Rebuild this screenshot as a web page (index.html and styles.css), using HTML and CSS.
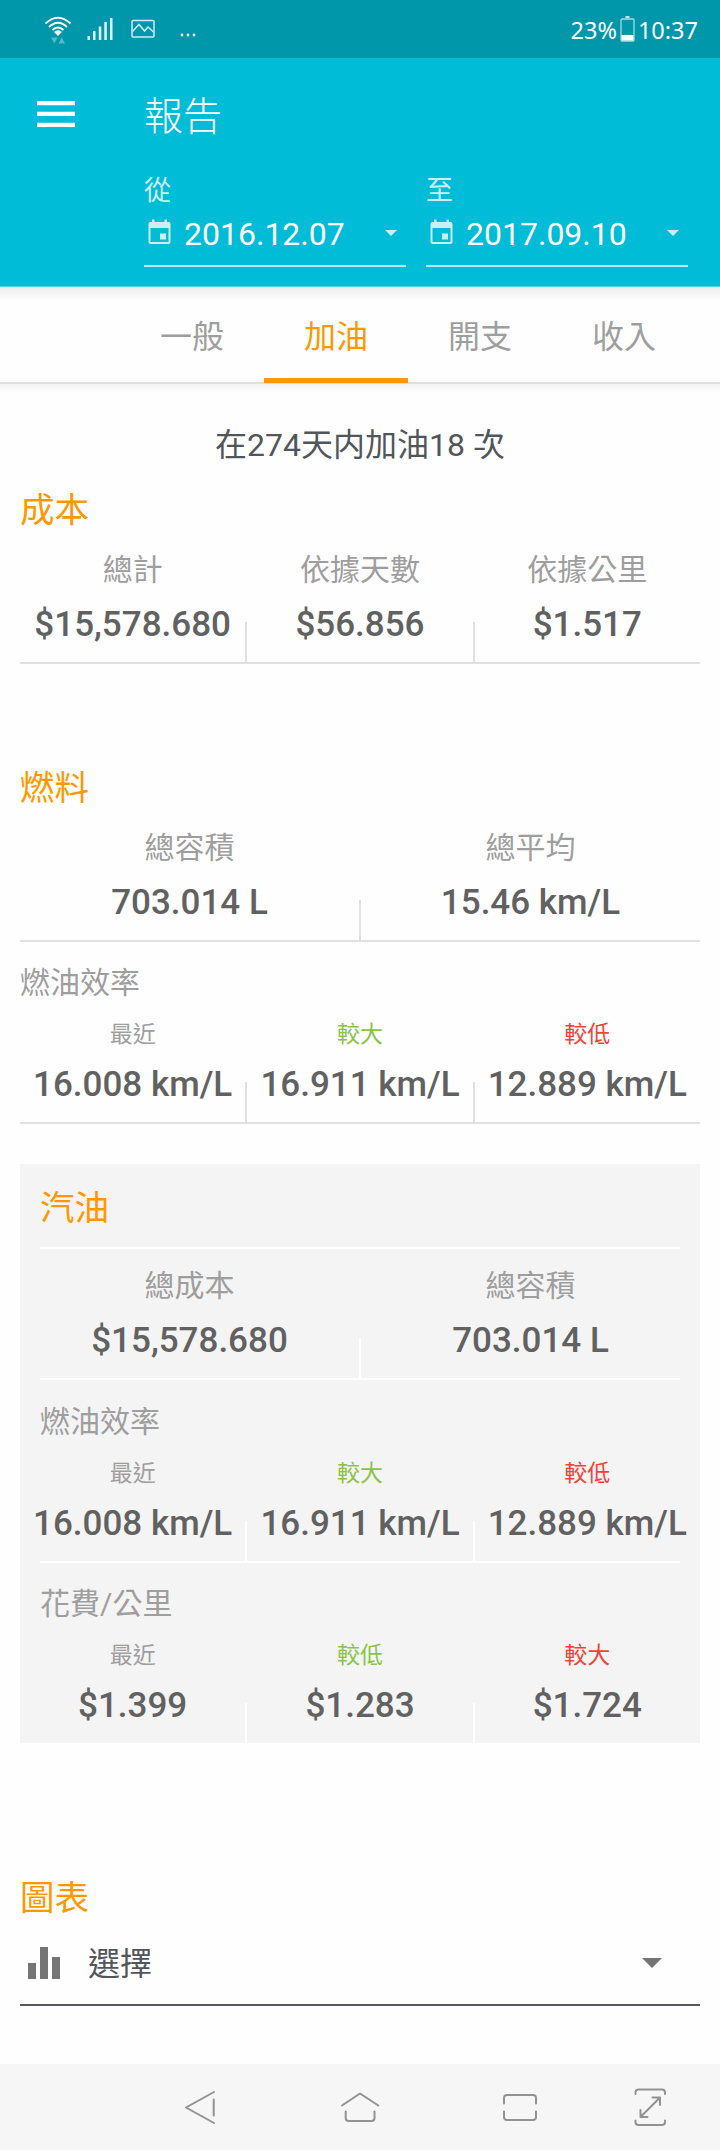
FILE: index.html
```
<!DOCTYPE html>
<html lang="zh-Hant">
<head>
    <meta charset="UTF-8">
    <meta name="viewport" content="width=device-width, initial-scale=1.0">
    <title>報告</title>
    <link rel="stylesheet" href="styles.css">
</head>
<body>
    <div class="status-bar">
        <svg class="icon-wifi" width="28" height="28" viewBox="0 0 28 28" fill="none" stroke="#fff" stroke-width="1.8">
            <path d="M1.5 7.5Q14 -4 26.500 7.500"/>
            <path d="M5 11Q14 2.500 23 11"/>
            <path d="M8.500 14Q14 9 19.500 14"/>
            <path d="M10 16Q14 12.500 18 16L14 20Z" fill="#fff" stroke="none"/>
            <path d="M7 21.500h6.500l-3.250 6zM14.500 27.500h6.500l-3.250-6z" fill="#5ab9c9" stroke="none"/>
        </svg>
        <svg class="icon-signal" width="27" height="24" viewBox="0 0 27 24" fill="#e0f3f6">
            <path d="M0.500 19h2.500v4h-2.500zM6 14h2.500v9h-2.500zM11.800 9.500h2.500v13.500h-2.500zM17.300 5h2.500v18h-2.500zM23 1h2.500v22h-2.500z"/>
        </svg>
        <svg class="icon-image" width="24" height="20" viewBox="0 0 24 20" fill="none" stroke="#d0edf1" stroke-width="1.5">
            <rect x="1" y="1.500" width="22" height="16.500" rx="1"/>
            <path d="M1.500 12.500L8 5.500L13.500 12L17 8L22.500 13"/>
        </svg>
        <svg class="icon-more" width="16" height="4" viewBox="0 0 16 4" fill="#fff">
            <circle cx="2" cy="2" r="1.400"/>
            <circle cx="8" cy="2" r="1.400"/>
            <circle cx="14" cy="2" r="1.400"/>
        </svg>
        <div class="status-right">
            <span>23%</span>
            <svg class="icon-battery" width="15" height="26" viewBox="0 0 15 26">
                <path d="M5.500 1h4" stroke="#fff" stroke-width="1.500"/>
                <rect x="1" y="3" width="13" height="22" rx="1" fill="none" stroke="#a6dae2" stroke-width="1.300"/>
                <path d="M1.500 19h12v5.500h-12z" fill="#fff"/>
            </svg>
            <span>10:37</span>
        </div>
    </div>

    <header class="header">
        <div class="title-row">
            <svg class="icon-menu" width="38" height="26" viewBox="0 0 38 26" fill="#fff">
                <path d="M0 0h38v4.300h-38zM0 10.800h38v4.300h-38zM0 21.700h38v4.300h-38z"/>
            </svg>
            <h1>報告</h1>
        </div>
        <div class="dates">
            <div class="date-field">
                <label>從</label>
                <div class="date-value">
                    <svg class="icon-calendar" width="23" height="26" viewBox="0 0 23 26" fill="#cceff5">
                        <path fill-rule="evenodd" d="M4 0.500h2.500v2.500h10v-2.500h2.500v2.500h1.500q2 0 2 2v18q0 2-2 2h-18q-2 0-2-2v-18q0-2 2-2h1.500zM2.500 9v14h18v-14z"/>
                        <path d="M12 14.500h6v6h-6z"/>
                    </svg>
                    <span>2016.12.07</span>
                    <svg class="icon-caret" width="12" height="6" viewBox="0 0 12 6" fill="#cceff5"><path d="M0 0h12l-6 6z"/></svg>
                </div>
            </div>
            <div class="date-field">
                <label>至</label>
                <div class="date-value">
                    <svg class="icon-calendar" width="23" height="26" viewBox="0 0 23 26" fill="#cceff5">
                        <path fill-rule="evenodd" d="M4 0.500h2.500v2.500h10v-2.500h2.500v2.500h1.500q2 0 2 2v18q0 2-2 2h-18q-2 0-2-2v-18q0-2 2-2h1.500zM2.500 9v14h18v-14z"/>
                        <path d="M12 14.500h6v6h-6z"/>
                    </svg>
                    <span>2017.09.10</span>
                    <svg class="icon-caret" width="12" height="6" viewBox="0 0 12 6" fill="#cceff5"><path d="M0 0h12l-6 6z"/></svg>
                </div>
            </div>
        </div>
    </header>

    <nav class="tabs">
        <a class="tab">一般</a>
        <a class="tab active">加油</a>
        <a class="tab">開支</a>
        <a class="tab">收入</a>
    </nav>

    <main class="content">
        <p class="summary">在274天内加油18 次</p>

        <section class="section">
            <h2>成本</h2>
            <div class="stats">
                <div class="stat"><span class="label">總計</span><span class="value">$15,578.680</span></div>
                <div class="divider"></div>
                <div class="stat"><span class="label">依據天數</span><span class="value">$56.856</span></div>
                <div class="divider"></div>
                <div class="stat"><span class="label">依據公里</span><span class="value">$1.517</span></div>
            </div>
            <hr>
        </section>

        <section class="section fuel">
            <h2>燃料</h2>
            <div class="stats">
                <div class="stat"><span class="label">總容積</span><span class="value">703.014 L</span></div>
                <div class="divider"></div>
                <div class="stat"><span class="label">總平均</span><span class="value">15.46 km/L</span></div>
            </div>
            <hr>
            <h3>燃油效率</h3>
            <div class="stats">
                <div class="stat"><span class="label small">最近</span><span class="value">16.008 km/L</span></div>
                <div class="divider"></div>
                <div class="stat"><span class="label small green">較大</span><span class="value">16.911 km/L</span></div>
                <div class="divider"></div>
                <div class="stat"><span class="label small red">較低</span><span class="value">12.889 km/L</span></div>
            </div>
            <hr>
        </section>

        <section class="card">
            <h2>汽油</h2>
            <hr>
            <div class="stats first">
                <div class="stat"><span class="label">總成本</span><span class="value">$15,578.680</span></div>
                <div class="divider"></div>
                <div class="stat"><span class="label">總容積</span><span class="value">703.014 L</span></div>
            </div>
            <hr>
            <h3>燃油效率</h3>
            <div class="stats">
                <div class="stat"><span class="label small">最近</span><span class="value">16.008 km/L</span></div>
                <div class="divider"></div>
                <div class="stat"><span class="label small green">較大</span><span class="value">16.911 km/L</span></div>
                <div class="divider"></div>
                <div class="stat"><span class="label small red">較低</span><span class="value">12.889 km/L</span></div>
            </div>
            <hr>
            <h3>花費/公里</h3>
            <div class="stats">
                <div class="stat"><span class="label small">最近</span><span class="value">$1.399</span></div>
                <div class="divider"></div>
                <div class="stat"><span class="label small green">較低</span><span class="value">$1.283</span></div>
                <div class="divider"></div>
                <div class="stat"><span class="label small red">較大</span><span class="value">$1.724</span></div>
            </div>
        </section>

        <section class="chart">
            <h2>圖表</h2>
            <div class="select">
                <svg class="icon-chart" width="32" height="32" viewBox="0 0 32 32" fill="#757575">
                    <path d="M0 16h8v16h-8zM12 0h8v32h-8zM24 10h8v22h-8z"/>
                </svg>
                <span>選擇</span>
                <svg class="icon-caret" width="20" height="10" viewBox="0 0 20 10" fill="#757575"><path d="M0 0h20l-10 10z"/></svg>
            </div>
        </section>
    </main>

    <footer class="nav-bar">
        <svg width="720" height="86" viewBox="0 0 720 86" fill="none" stroke="#929292" stroke-width="2" stroke-linecap="round" stroke-linejoin="round">
            <!-- back -->
            <path d="M214 28L186 43.500L214 59M213.700 35.500V51.500"/>
            <!-- home -->
            <path d="M342 41.500L360 29.500L378.300 41.500M345.700 47.500V54Q345.700 57 348.700 57H371.500Q374.500 57 374.500 54V47.500"/>
            <!-- recent apps -->
            <path d="M504 39.500V34Q504 31 507 31H533Q536 31 536 34V39.500M504 47.500V53Q504 56 507 56H533Q536 56 536 53V47.500"/>
            <!-- full screen -->
            <path d="M635.500 30V28.500Q635.500 25.500 638.500 25.500H662Q665 25.500 665 28.500V30M635.500 56.500V58Q635.500 61 638.500 61H662Q665 61 665 58V56.500"/>
            <path d="M641 52.500L660 33.500M652.500 33.500H660V41M640.500 46V53H647.500"/>
        </svg>
    </footer>
</body>
</html>
```
FILE: styles.css
```
* {
    box-sizing: border-box;
}
body {
    margin: 0;
    width: 720px;
    background-color: #fefefe;
    font-family: Roboto, "Noto Sans CJK TC", sans-serif;
}
h1, h2, h3, p {
    margin: 0;
    font-weight: 400;
}
svg {
    display: block;
    flex: none;
}
.status-bar {
    display: flex;
    align-items: center;
    height: 58px;
    padding: 0 22px 0 44px;
    background-color: #0097ab;
    color: white;
}
.icon-wifi {
    margin-top: 2px;
}
.icon-signal {
    margin-left: 15px;
}
.icon-image {
    margin-left: 17px;
}
.icon-more {
    margin: 12px 0 0 25px;
}
.status-right {
    display: flex;
    align-items: center;
    margin-left: auto;
    padding-top: 2px;
    font-family: "Noto Sans", sans-serif;
    font-size: 23.500px;
    line-height: 30px;
}
.icon-battery {
    margin: 0 3px 3px 3px;
}
.header {
    height: 229px;
    background-color: #00bcd6;
    color: white;
    border-bottom: 1px solid #58cfe0;
}
.title-row {
    display: flex;
    align-items: center;
    height: 110px;
    padding-left: 37px;
}
.icon-menu {
    margin-top: 1px;
}
h1 {
    margin: 8px 0 0 69px;
    font-size: 39px;
    line-height: 50px;
    font-weight: 300;
}
.dates {
    display: flex;
    gap: 20px;
    padding-left: 144px;
}
.date-field {
    width: 262px;
    border-bottom: 2px solid #b8eaf2;
}
.date-field label {
    display: block;
    padding-top: 5px;
    font-size: 27px;
    line-height: 36px;
    color: #cceff5;
}
.date-value {
    display: flex;
    align-items: center;
    height: 56px;
    padding: 0 9px 10px 4px;
    font-size: 32px;
    line-height: 40px;
}
.date-value span {
    margin: 4px 0 0 13px;
}
.icon-caret {
    margin-left: auto;
}
.date-value .icon-caret {
    margin-top: 2px;
}
.tabs {
    display: flex;
    height: 97px;
    padding-left: 120px;
    background: linear-gradient(#ececec, #fefefe 14px);
    border-bottom: 2px solid #dfdfdf;
}
.tab {
    width: 144px;
    height: 96px;
    padding-top: 28px;
    font-size: 32px;
    line-height: 44px;
    text-align: center;
    color: #9e9e9e;
}
.tab.active {
    color: #ff9800;
    border-bottom: 5px solid #ff9800;
}
.content {
    padding: 0 20px;
    height: 1680px;
    background: linear-gradient(#f2f2f2, #fefefe 8px);
}
.summary {
    padding: 39px 0 21px;
    font-size: 32px;
    line-height: 44px;
    text-align: center;
    color: #51565b;
}
h2 {
    font-size: 34.500px;
    line-height: 44px;
    color: #ff9800;
}
h3 {
    margin: 21px 0 17px;
    font-size: 30px;
    line-height: 40px;
    color: #9e9e9e;
}
hr {
    height: 2px;
    margin: 0;
    border: none;
    background-color: #e0e0e0;
}
.section h2 {
    margin-bottom: 18px;
}
.fuel {
    margin-top: 102px;
}
.stats {
    display: flex;
    align-items: flex-end;
}
.stat {
    flex: 1 1 0;
    display: flex;
    flex-direction: column;
    align-items: center;
    gap: 13px;
    padding-bottom: 15px;
    white-space: nowrap;
}
.divider {
    width: 2px;
    height: 40px;
    background-color: #e0e0e0;
}
.label {
    font-size: 30px;
    line-height: 40px;
    color: #9e9e9e;
}
.label.small {
    font-size: 23px;
    line-height: 30px;
}
.label.green {
    color: #8bc34a;
}
.label.red {
    color: #f44336;
}
.value {
    font-size: 35px;
    line-height: 44px;
    font-weight: 500;
    color: #616161;
}
.card {
    margin-top: 40px;
    padding-top: 22px;
    background-color: #f4f4f4;
}
.card h2 {
    margin: 0 20px 17px;
}
.card h3 {
    margin-left: 20px;
}
.card hr {
    margin: 0 20px;
    background-color: white;
}
.card .divider {
    background-color: white;
}
.card .first {
    padding-top: 17px;
}
.card .first + hr + h3 {
    margin-top: 22px;
}
.chart {
    margin-top: 133px;
}
.select {
    display: flex;
    align-items: center;
    height: 86px;
    padding: 2px 38px 0 8px;
    border-bottom: 2px solid #55595d;
    font-size: 32px;
    line-height: 44px;
    color: #51565b;
}
.select span {
    margin: 2px 0 0 28px;
}
.nav-bar {
    height: 86px;
    background-color: #f6f6f6;
}
```
